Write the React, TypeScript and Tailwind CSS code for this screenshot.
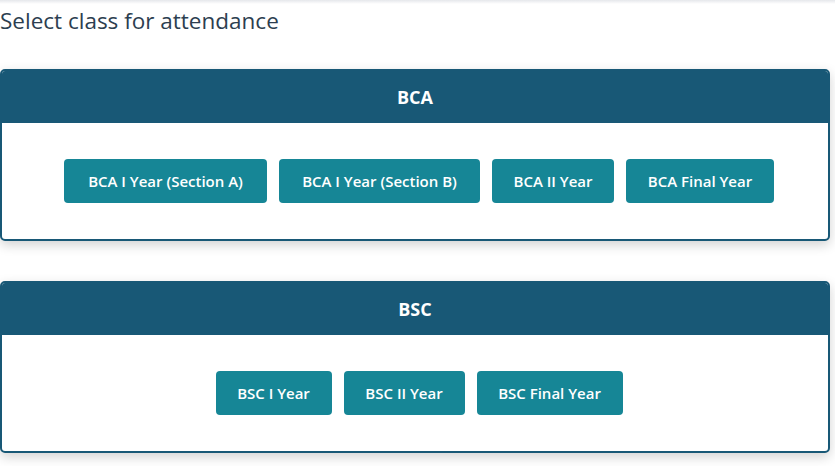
const groups = [
    {
        name: "BCA",
        classes: [
            { label: "BCA I Year (Section A)", w: "w-[203px]" },
            { label: "BCA I Year (Section B)", w: "w-[201px]" },
            { label: "BCA II Year", w: "w-[122px]" },
            { label: "BCA Final Year", w: "w-[148px]" },
        ],
    },
    {
        name: "BSC",
        classes: [
            { label: "BSC I Year", w: "w-[116px]" },
            { label: "BSC II Year", w: "w-[121px]" },
            { label: "BSC Final Year", w: "w-[146px]" },
        ],
    },
];

const App = () => {
    return (
        <div className="w-[835px] h-[466px] bg-white overflow-hidden font-['Open_Sans',sans-serif]">
            <div className="h-[4px] bg-gradient-to-b from-gray-200 to-white" />
            <div className="text-[22.5px] leading-[30px] text-[#2c3e50] pt-[2px]">
                Select class for attendance
            </div>
            <div className="flex flex-col gap-[40px] mt-[33px] w-[830px]">
                {groups.map((group) => (
                    <div
                        key={group.name}
                        className="rounded-[5px] border-2 border-[#185876] bg-white shadow-[0_4px_12px_rgba(0,0,0,0.18)] overflow-hidden"
                    >
                        <div className="h-[52px] bg-[#185876] flex items-center justify-center text-white text-[18px] font-bold">
                            {group.name}
                        </div>
                        <div className="h-[116px] flex items-center justify-center gap-[12px] pl-[8px]">
                            {group.classes.map((c) => (
                                <button
                                    key={c.label}
                                    className={`${c.w} h-[44px] rounded-[4px] bg-[#168696] text-white text-[15px] font-semibold whitespace-nowrap`}
                                >
                                    {c.label}
                                </button>
                            ))}
                        </div>
                    </div>
                ))}
            </div>
        </div>
    );
};

export default App;
